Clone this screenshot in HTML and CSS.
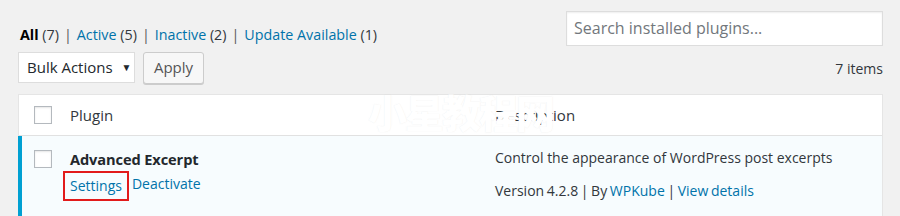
FILE: index.html
```html
<!DOCTYPE html>
<html>
<head>
<meta charset="utf-8">
<link rel="stylesheet" href="styles.css">
</head>
<body>
<div class="wrap">
  <div class="toprow">
    <ul class="subsubsub">
      <li><b>All</b> <span class="count">(7)</span></li>
      <li class="sep">|</li>
      <li><a>Active <span class="count">(5)</span></a></li>
      <li class="sep">|</li>
      <li><a>Inactive <span class="count">(2)</span></a></li>
      <li class="sep">|</li>
      <li><a>Update Available <span class="count">(1)</span></a></li>
    </ul>
    <div class="search">Search installed plugins...</div>
  </div>
  <div class="navrow">
    <div class="actions">
      <div class="select">Bulk Actions <span class="caret">▼</span></div>
      <div class="button">Apply</div>
    </div>
    <div class="items">7 items</div>
  </div>
  <div class="table">
    <div class="thead">
      <div class="cb"><span class="box"></span></div>
      <div class="col-plugin">Plugin</div>
      <div class="col-desc">Description</div>
    </div>
    <div class="trow">
      <div class="cb"><span class="box"></span></div>
      <div class="col-plugin">
        <div class="title">Advanced Excerpt</div>
        <div class="rowactions"><a class="hl">Settings</a> <a>Deactivate</a></div>
      </div>
      <div class="col-desc">
        <div class="desc">Control the appearance of WordPress post excerpts</div>
        <div class="ver">Version 4.2.8 | By <a>WPKube</a> | <a>View details</a></div>
      </div>
    </div>
    <div class="watermark">小星教程网</div>
  </div>
</div>
</body>
</html>
```
FILE: styles.css
```css
html, body { margin: 0; padding: 0; }
body {
  background: #f1f1f1;
  font-family: "Open Sans", "Noto Sans", sans-serif;
  font-size: 14px;
  color: #23282d;
  width: 900px;
  height: 216px;
  overflow: hidden;
}
a { color: #0073aa; text-decoration: none; }
.wrap { padding: 11px 17px 0 18px; }
.toprow {
  display: flex;
  justify-content: space-between;
  align-items: flex-end;
}
.subsubsub {
  list-style: none;
  margin: 0;
  padding: 0 0 0 2px;
  display: flex;
  gap: 5px;
  line-height: 22px;
  color: #32373c;
  font-size: 14.3px;
}
.subsubsub b { color: #000; font-weight: 700; }
.subsubsub .count { color: #32373c; }
.subsubsub .sep { color: #555; }
.search {
  box-sizing: border-box;
  width: 317px;
  height: 35px;
  background: #fff;
  border: 1px solid #ddd;
  box-shadow: inset 0 1px 2px rgba(0,0,0,0.07);
  font-size: 16px;
  color: #72777c;
  padding: 4px 7px;
  line-height: 25px;
}
.navrow {
  margin-top: 6px;
  display: flex;
  justify-content: space-between;
  align-items: center;
  height: 32px;
}
.actions { display: flex; gap: 8px; }
.select {
  box-sizing: border-box;
  width: 117px;
  height: 31px;
  background: #fff;
  border: 1px solid #ddd;
  padding: 0 0 0 8px;
  line-height: 29px;
  font-size: 15px;
  color: #23282d;
}
.caret { font-size: 10px; margin-left: 5px; vertical-align: 2px; }
.button {
  box-sizing: border-box;
  width: 61px;
  height: 32px;
  background: #f7f7f7;
  border: 1px solid #ccc;
  border-radius: 3px;
  box-shadow: 0 1px 0 #ccc;
  text-align: center;
  line-height: 29px;
  font-size: 15px;
  color: #555;
}
.items { font-size: 14px; color: #32373c; }
.table {
  position: relative;
  margin-top: 10px;
  background: #fff;
  border: 1px solid #e5e5e5;
  border-bottom: none;
}
.thead, .trow {
  display: grid;
  grid-template-columns: 51px 425px 1fr;
}
.thead {
  height: 40px;
  border-bottom: 1px solid #e1e1e1;
  align-items: center;
  font-size: 15px;
}
.thead .col-plugin, .thead .col-desc { color: #32373c; }
.cb { padding-left: 15px; }
.box {
  display: block;
  box-sizing: border-box;
  width: 18px;
  height: 18px;
  border: 1px solid #b4b9be;
  background: #fff;
  box-shadow: inset 0 1px 2px rgba(0,0,0,0.1);
}
.trow {
  background: #f7fcfe;
  border-left: 4px solid #00a0d2;
  margin-left: -1px;
  height: 90px;
  grid-template-columns: 48px 425px 1fr;
}
.trow .cb { padding-top: 14px; padding-left: 12px; }
.trow .col-plugin { padding-top: 12px; }
.title { font-weight: 700; font-size: 14.6px; color: #23282d; line-height: 22px; letter-spacing: -0.1px; }
.rowactions { margin-top: 3px; line-height: 22px; display: flex; gap: 5px; }
.rowactions .hl {
  outline: 2px solid #e21b1b;
  outline-offset: 0;
  padding: 2px 5px 3px;
  margin-left: -5px;
  line-height: 21px;
}
.trow .col-desc { padding-top: 11px; }
.desc { line-height: 22px; color: #32373c; }
.ver { margin-top: 9px; line-height: 22px; color: #32373c; padding-top: 2px; word-spacing: -1px; }
.watermark {
  position: absolute;
  left: 349px;
  top: -7px;
  font-family: "Noto Sans CJK SC", sans-serif;
  font-weight: 900;
  font-size: 39px;
  line-height: 46px;
  color: #fff;
  text-shadow: 0 0 1px rgba(200,200,200,0.35);
  letter-spacing: -2px;
}
```
